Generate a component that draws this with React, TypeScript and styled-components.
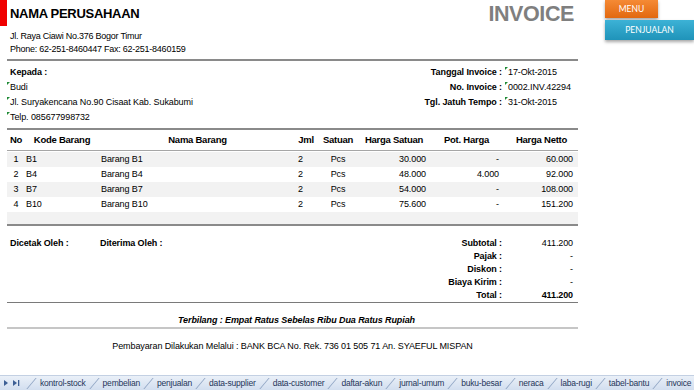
import React from 'react';
import styled, { createGlobalStyle } from 'styled-components';

const GlobalStyle = createGlobalStyle`
    html, body {
        margin: 0;
        padding: 0;
        background: #fff;
    }
    body {
        font-family: "Liberation Sans", Arial, sans-serif;
        font-size: 9px;
        letter-spacing: -0.1px;
        color: #000;
    }
`;

const Page = styled.div`
    width: 694px;
    height: 390px;
    display: flex;
    flex-direction: column;
    overflow: hidden;
`;

const Main = styled.div`
    flex: 1;
    display: flex;
    align-items: flex-start;
`;

const RedMark = styled.div`
    width: 7px;
    height: 26px;
    background: #f00000;
    flex-shrink: 0;
`;

const Sheet = styled.div`
    width: 571px;
    flex-shrink: 0;
`;

const Header = styled.div`
    display: flex;
    justify-content: space-between;
    align-items: flex-start;
    padding: 0 4px 3px 3px;
    border-bottom: 2px solid #8a8a8a;
`;

const CompanyName = styled.div`
    padding-top: 4px;
    font-size: 13px;
    line-height: 19px;
    font-weight: bold;
    letter-spacing: -0.3px;
`;

const Address = styled.div`
    margin-top: 7px;
    line-height: 13px;
    letter-spacing: -0.25px;
`;

const Title = styled.div`
    font-size: 21.5px;
    line-height: 29px;
    font-weight: bold;
    letter-spacing: -0.4px;
    color: #7f7f7f;
`;

const Parties = styled.div`
    display: flex;
    justify-content: space-between;
    padding: 4px 5px 3px 3px;
    border-bottom: 2px solid #8a8a8a;
    line-height: 15px;
`;

const Customer = styled.div`
    display: flex;
    flex-direction: column;
`;

const Bold = styled.span`
    font-weight: bold;
`;

const Flagged = styled.span<{ $shift?: number }>`
    &::before {
        content: '';
        display: inline-block;
        vertical-align: top;
        margin: 2px 0 0 ${p => p.$shift ?? -3}px;
        border-top: 3px solid #1f8a36;
        border-right: 3px solid transparent;
    }
`;

const PairGrid = styled.div`
    display: grid;
    grid-template-columns: auto 68px;
    column-gap: 3px;
    align-content: start;
`;

const Label = styled.div`
    font-weight: bold;
    text-align: right;
    white-space: nowrap;
`;

const Value = styled.div<{ $align?: string; $strong?: boolean }>`
    text-align: ${p => p.$align || 'left'};
    font-weight: ${p => (p.$strong ? 'bold' : 'normal')};
    white-space: nowrap;
`;

const Table = styled.div`
    border-bottom: 2px solid #8a8a8a;
`;

const Row = styled.div<{ $head?: boolean; $shade?: boolean; $h?: number }>`
    display: grid;
    grid-template-columns: 18px 74px 197px 20px 44px 68px 77px 73px;
    height: ${p => p.$h || 15}px;
    line-height: ${p => p.$h || 15}px;
    background: ${p => (p.$shade ? '#f2f2f2' : 'transparent')};
    font-weight: ${p => (p.$head ? 'bold' : 'normal')};
    font-size: ${p => (p.$head ? '9.5px' : '9px')};
    letter-spacing: ${p => (p.$head ? '-0.25px' : '-0.1px')};
    border-bottom: ${p => (p.$head ? '1px solid #a6a6a6' : 'none')};
    margin-bottom: ${p => (p.$head ? '1px' : '0')};
`;

const Cell = styled.div<{ $align?: string; $pad?: string }>`
    text-align: ${p => p.$align || 'left'};
    padding: ${p => p.$pad || '0'};
    white-space: nowrap;
`;

const Summary = styled.div`
    display: flex;
    justify-content: space-between;
    padding: 11px 5px 0 3px;
    border-bottom: 1px solid #7a7a7a;
    line-height: 13px;
`;

const Signers = styled.div`
    display: flex;
    font-weight: bold;
`;

const Signer = styled.div`
    width: 90px;
`;

const Spelled = styled.div`
    padding: 11px 0 0 8px;
    line-height: 13px;
    text-align: center;
    font-weight: bold;
    font-style: italic;
    border-bottom: 2px solid #c6c6c6;
`;

const Payment = styled.div`
    padding-top: 10px;
    line-height: 14px;
    text-align: center;
`;

const Side = styled.div`
    margin-left: 27px;
    display: flex;
    flex-direction: column;
    align-items: flex-start;
    font-family: Lato, "Open Sans", sans-serif;
    font-size: 8.5px;
    letter-spacing: 0;
    color: #fff;
`;

const SideButton = styled.div<{ $tone: 'orange' | 'teal'; $w: number }>`
    width: ${p => p.$w}px;
    height: ${p => (p.$tone === 'orange' ? 18 : 20)}px;
    margin-top: ${p => (p.$tone === 'orange' ? 0 : 2)}px;
    line-height: ${p => (p.$tone === 'orange' ? 18 : 20)}px;
    text-align: center;
    background: ${p =>
        p.$tone === 'orange'
            ? 'linear-gradient(#f58a35, #e2680f)'
            : 'linear-gradient(#3cb2d6, #1f93b9)'};
    box-shadow: 0 2px 3px rgba(0, 0, 0, 0.35);
`;

const TabBar = styled.div`
    height: 14px;
    display: flex;
    align-items: center;
    background: linear-gradient(#eaf0f8, #d2deef);
    border-top: 1px solid #c3d0e3;
    color: #25365a;
    font-size: 8.5px;
    letter-spacing: -0.2px;
    white-space: nowrap;
`;

const Nav = styled.div`
    width: 31px;
    flex-shrink: 0;
    display: flex;
    align-items: center;
    gap: 5px;
    padding-left: 4px;
    box-sizing: border-box;
`;

const Tab = styled.div`
    flex-shrink: 0;
    display: flex;
    align-items: center;
    padding-right: 8px;
`;

const TabEdge = styled.span`
    width: 1px;
    height: 11px;
    margin-right: 8px;
    background: #8ea3c2;
    transform: skewX(-40deg);
`;

const columns = [
    { title: 'No', align: 'center' },
    { title: 'Kode Barang', align: 'left', pad: '0 0 0 1px' },
    { title: 'Nama Barang', align: 'left', pad: '0 0 0 2px' },
    { title: 'Jml', align: 'left', pad: '0 0 0 2px' },
    { title: 'Satuan', align: 'center' },
    { title: 'Harga Satuan', align: 'right', pad: '0 2px 0 0' },
    { title: 'Pot. Harga', align: 'right', pad: '0 6px 0 0' },
    { title: 'Harga Netto', align: 'right', pad: '0 5px 0 0' },
];

const items = [
    ['1', 'B1', 'Barang B1', '2', 'Pcs', '30.000', '-', '60.000'],
    ['2', 'B4', 'Barang B4', '2', 'Pcs', '48.000', '4.000', '92.000'],
    ['3', 'B7', 'Barang B7', '2', 'Pcs', '54.000', '-', '108.000'],
    ['4', 'B10', 'Barang B10', '2', 'Pcs', '75.600', '-', '151.200'],
];

const totals = [
    ['Subtotal :', '411.200'],
    ['Pajak :', '-'],
    ['Diskon :', '-'],
    ['Biaya Kirim :', '-'],
    ['Total :', '411.200'],
];

const sheets = [
    'kontrol-stock', 'pembelian', 'penjualan', 'data-supplier', 'data-customer', 'daftar-akun',
    'jurnal-umum', 'buku-besar', 'neraca', 'laba-rugi', 'tabel-bantu', 'invoice',
];

export default function App() {
    return (
        <>
            <GlobalStyle />
            <Page>
                <Main>
                    <RedMark />
                    <Sheet>
                        <Header>
                            <div>
                                <CompanyName>NAMA PERUSAHAAN</CompanyName>
                                <Address>
                                    <div>Jl. Raya Ciawi No.376 Bogor Timur</div>
                                    <div>Phone: 62-251-8460447 Fax: 62-251-8460159</div>
                                </Address>
                            </div>
                            <Title>INVOICE</Title>
                        </Header>

                        <Parties>
                            <Customer>
                                <Bold>Kepada :</Bold>
                                <Flagged>Budi</Flagged>
                                <Flagged>Jl. Suryakencana No.90 Cisaat Kab. Sukabumi</Flagged>
                                <Flagged>Telp. 085677998732</Flagged>
                            </Customer>
                            <PairGrid>
                                <Label>Tanggal Invoice :</Label>
                                <Value><Flagged $shift={0}>17-Okt-2015</Flagged></Value>
                                <Label>No. Invoice :</Label>
                                <Value><Flagged $shift={0}>0002.INV.42294</Flagged></Value>
                                <Label>Tgl. Jatuh Tempo :</Label>
                                <Value><Flagged $shift={0}>31-Okt-2015</Flagged></Value>
                            </PairGrid>
                        </Parties>

                        <Table>
                            <Row $head $h={20}>
                                {columns.map(c => (
                                    <Cell key={c.title} $align="center">{c.title}</Cell>
                                ))}
                            </Row>
                            {items.map((r, i) => (
                                <Row key={r[0]} $shade={i % 2 === 0}>
                                    {r.map((v, j) => (
                                        <Cell key={j} $align={columns[j].align} $pad={columns[j].pad}>{v}</Cell>
                                    ))}
                                </Row>
                            ))}
                            <Row $shade $h={12} />
                        </Table>

                        <Summary>
                            <Signers>
                                <Signer>Dicetak Oleh :</Signer>
                                <Signer>Diterima Oleh :</Signer>
                            </Signers>
                            <PairGrid>
                                {totals.map(([label, value], i) => (
                                    <React.Fragment key={label}>
                                        <Label>{label}</Label>
                                        <Value $align="right" $strong={i === totals.length - 1}>{value}</Value>
                                    </React.Fragment>
                                ))}
                            </PairGrid>
                        </Summary>

                        <Spelled>Terbilang : Empat Ratus Sebelas Ribu Dua Ratus Rupiah</Spelled>
                        <Payment>
                            Pembayaran Dilakukan Melalui : BANK BCA No. Rek. 736 01 505 71 An. SYAEFUL MISPAN
                        </Payment>
                    </Sheet>

                    <Side>
                        <SideButton $tone="orange" $w={53}>MENU</SideButton>
                        <SideButton $tone="teal" $w={89}>PENJUALAN</SideButton>
                    </Side>
                </Main>

                <TabBar>
                    <Nav>
                        <svg width="4" height="6" viewBox="0 0 4 6">
                            <path d="M0 0 L4 3 L0 6 Z" fill="#3d5f95" />
                        </svg>
                        <svg width="7" height="6" viewBox="0 0 7 6">
                            <path d="M0 0 L4 3 L0 6 Z" fill="#3d5f95" />
                            <rect x="5" y="0" width="1.3" height="6" fill="#3d5f95" />
                        </svg>
                    </Nav>
                    {sheets.map(s => (
                        <Tab key={s}>
                            <TabEdge />
                            {s}
                        </Tab>
                    ))}
                </TabBar>
            </Page>
        </>
    );
}
